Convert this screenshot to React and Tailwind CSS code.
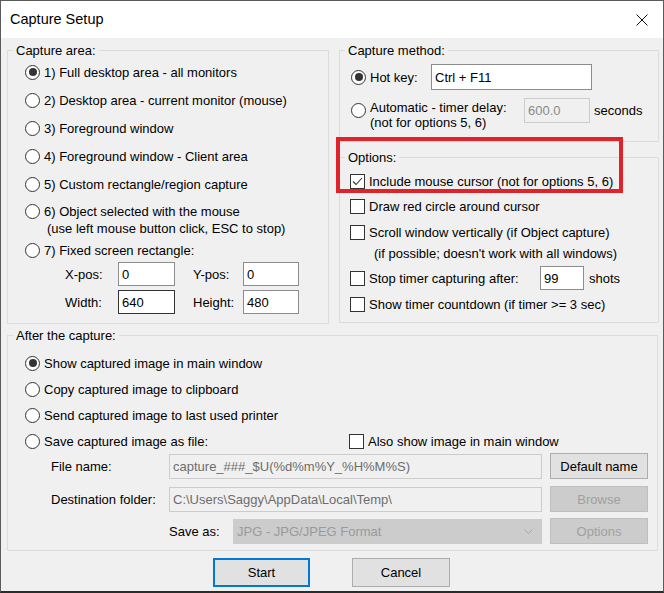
import React from 'react';

const font = "font-['Liberation_Sans',Arial,sans-serif]";

function Radio({ on }) {
  return (
    <span className="w-[15px] h-[15px] shrink-0 rounded-full border border-[#333] bg-white flex items-center justify-center">
      {on && <span className="w-[8px] h-[8px] rounded-full bg-[#333]" />}
    </span>
  );
}

function Check({ on }) {
  return (
    <span className="w-[15px] h-[15px] shrink-0 border border-[#333] bg-white flex items-center justify-center">
      {on && (
        <svg width="13" height="13" viewBox="0 0 13 13">
          <polyline points="2,6.5 5,9.5 11,3" fill="none" stroke="#333" strokeWidth="1.1" />
        </svg>
      )}
    </span>
  );
}

function RadioRow({ on, children, className = '' }) {
  return (
    <div className={`flex items-center h-[20px] gap-[4px] ${className}`}>
      <Radio on={on} />
      <span className="whitespace-nowrap">{children}</span>
    </div>
  );
}

function CheckRow({ on, children, className = '' }) {
  return (
    <div className={`flex items-center h-[20px] gap-[4px] ${className}`}>
      <Check on={on} />
      <span className="whitespace-nowrap">{children}</span>
    </div>
  );
}

function Edit({ value, className = '', dark }) {
  return (
    <div className={`flex items-center pl-[3px] bg-white border ${dark ? 'border-[#333]' : 'border-[#8c8c8c]'} ${className}`}>
      {value}
    </div>
  );
}

function Group({ title, className = '', children }) {
  return (
    <fieldset className={`border border-[#dcdcdc] ${className}`}>
      <legend className="ml-[5px] px-[3px] leading-[15px]">{title}</legend>
      {children}
    </fieldset>
  );
}

function WinButton({ children, disabled, className = '' }) {
  return (
    <div
      className={`flex items-center justify-center border ${
        disabled ? 'bg-[#cccccc] border-[#bfbfbf] text-[#a0a0a0]' : 'bg-[#e1e1e1] border-[#adadad] text-black'
      } ${className}`}
    >
      {children}
    </div>
  );
}

export default function App() {
  return (
    <div className={`relative w-[664px] h-[593px] border border-[#5b5b5b] border-b-2 border-b-[#2b2b2b] bg-[#f0f0f0] overflow-hidden text-[13px] text-black ${font}`}>
      {/* title bar */}
      <div className="h-[37px] bg-white flex items-center justify-between pl-[9px] pr-[15px]">
        <span className="text-[14.5px]">Capture Setup</span>
        <svg width="12" height="12" viewBox="0 0 12 12">
          <path d="M0.5 0.5 L11.5 11.5 M11.5 0.5 L0.5 11.5" stroke="#111" strokeWidth="1" />
        </svg>
      </div>

      <div className="pl-[6px] pt-[5px]">
        <div className="flex gap-[10px] leading-[15px]">
          <Group title="Capture area:" className="w-[322px] h-[281px]">
            <div className="pl-[17px] flex flex-col">
              <RadioRow on className="mt-[4px]">1) Full desktop area - all monitors</RadioRow>
              <RadioRow className="mt-[8px]">2) Desktop area - current monitor (mouse)</RadioRow>
              <RadioRow className="mt-[8px]">3) Foreground window</RadioRow>
              <RadioRow className="mt-[8px]">4) Foreground window - Client area</RadioRow>
              <RadioRow className="mt-[8px]">5) Custom rectangle/region capture</RadioRow>
              <div className="flex items-start gap-[4px] mt-[9px] leading-[17px]">
                <span className="mt-[1px]"><Radio /></span>
                <div className="whitespace-nowrap">
                  <div>6) Object selected with the mouse</div>
                  <div className="pl-[3px]">(use left mouse button click, ESC to stop)</div>
                </div>
              </div>
              <RadioRow className="mt-[3px]">7) Fixed screen rectangle:</RadioRow>
              <div className="flex items-center h-[24px] mt-[2px] pl-[40px]">
                <span className="w-[53px]">X-pos:</span>
                <Edit value="0" className="w-[57px] h-[24px]" />
                <span className="w-[50px] ml-[18px]">Y-pos:</span>
                <Edit value="0" className="w-[56px] h-[24px]" />
              </div>
              <div className="flex items-center h-[24px] mt-[4px] pl-[40px]">
                <span className="w-[53px]">Width:</span>
                <Edit value="640" dark className="w-[57px] h-[24px]" />
                <span className="w-[50px] ml-[18px]">Height:</span>
                <Edit value="480" className="w-[56px] h-[24px]" />
              </div>
            </div>
          </Group>

          <div className="flex flex-col">
            <Group title="Capture method:" className="w-[320px] h-[99px]">
              <div className="pl-[11px]">
                <div className="flex items-center mt-[6px]">
                  <div className="flex items-center gap-[4px] w-[80px]">
                    <Radio on />
                    <span>Hot key:</span>
                  </div>
                  <div className="w-[161px] h-[26px] bg-white border border-[#8c8c8c] flex items-center pl-[3px]">Ctrl + F11</div>
                </div>
                <div className="flex items-start mt-[8px]">
                  <div className="flex items-start gap-[4px] w-[173px]">
                    <span className="mt-[5px]"><Radio /></span>
                    <div className="mt-[2px] whitespace-nowrap">
                      <div>Automatic - timer delay:</div>
                      <div>(not for options 5, 6)</div>
                    </div>
                  </div>
                  <div className="w-[66px] h-[25px] bg-[#f0f0f0] border border-[#cccccc] text-[#8a8a8a] flex items-center pl-[3px]">600.0</div>
                  <span className="ml-[4px] mt-[5px]">seconds</span>
                </div>
              </div>
            </Group>

            <Group title="Options:" className="w-[320px] h-[173px] mt-[8px]">
              <div className="pl-[10px] flex flex-col">
                <CheckRow on className="mt-[6px]">Include mouse cursor (not for options 5, 6)</CheckRow>
                <CheckRow className="mt-[5px]">Draw red circle around cursor</CheckRow>
                <CheckRow className="mt-[6px]">Scroll window vertically (if Object capture)</CheckRow>
                <div className="h-[20px] flex items-center pl-[24px] mt-[1px] whitespace-nowrap">
                  (if possible; doesn't work with all windows)
                </div>
                <div className="flex items-center mt-[3px]">
                  <CheckRow className="w-[190px]">Stop timer capturing after:</CheckRow>
                  <div className="w-[44px] h-[24px] bg-white border border-[#8c8c8c] flex items-center pl-[3px]">99</div>
                  <span className="ml-[5px]">shots</span>
                </div>
                <CheckRow className="mt-[4px]">Show timer countdown (if timer &gt;= 3 sec)</CheckRow>
              </div>
            </Group>
          </div>
        </div>

        <Group title="After the capture:" className="w-[651px] h-[223px] mt-[4px] leading-[15px]">
          <div className="pl-[17px] flex flex-col">
            <RadioRow on className="mt-[10px]">Show captured image in main window</RadioRow>
            <RadioRow className="mt-[6px]">Copy captured image to clipboard</RadioRow>
            <RadioRow className="mt-[6px]">Send captured image to last used printer</RadioRow>
            <div className="flex items-center mt-[6px]">
              <RadioRow className="w-[324px]">Save captured image as file:</RadioRow>
              <CheckRow>Also show image in main window</CheckRow>
            </div>
          </div>

          <div className="pl-[43px] flex flex-col">
            <div className="flex items-center mt-[2px]">
              <span className="w-[118px]">File name:</span>
              <div className="w-[373px] h-[25px] bg-[#f0f0f0] border border-[#cccccc] text-[#6d6d6d] flex items-center pl-[3px]">
                capture_###_$U(%d%m%Y_%H%M%S)
              </div>
              <WinButton className="w-[98px] h-[26px] ml-[8px]">Default name</WinButton>
            </div>
            <div className="flex items-center mt-[7px]">
              <span className="w-[118px]">Destination folder:</span>
              <div className="w-[373px] h-[25px] bg-[#f0f0f0] border border-[#cccccc] text-[#6d6d6d] flex items-center pl-[3px]">
                C:\Users\Saggy\AppData\Local\Temp\
              </div>
              <WinButton disabled className="w-[98px] h-[26px] ml-[8px]">Browse</WinButton>
            </div>
            <div className="flex items-center mt-[6px]">
              <span className="w-[118px]" />
              <span className="w-[64px]">Save as:</span>
              <div className="w-[309px] h-[25px] bg-[#cccccc] border border-[#cccccc] text-[#9a9a9a] flex items-center justify-between pl-[3px] pr-[8px]">
                <span>JPG - JPG/JPEG Format</span>
                <svg width="9" height="5" viewBox="0 0 9 5">
                  <polyline points="0.5,0.5 4.5,4.5 8.5,0.5" fill="none" stroke="#a8a8a8" strokeWidth="1" />
                </svg>
              </div>
              <WinButton disabled className="w-[98px] h-[26px] ml-[8px]">Options</WinButton>
            </div>
          </div>
        </Group>

        <div className="flex mt-[7px] ml-[206px] gap-[42px]">
          <div className="w-[97px] h-[29px] bg-[#e1e1e1] border-2 border-[#0078d7] flex items-center justify-center">Start</div>
          <WinButton className="w-[98px] h-[29px]">Cancel</WinButton>
        </div>
      </div>

      {/* highlight box drawn over the dialog */}
      <div className="absolute left-[335px] top-[136px] w-[287px] h-[56px] border-4 border-[#e0232b]" />
    </div>
  );
}
